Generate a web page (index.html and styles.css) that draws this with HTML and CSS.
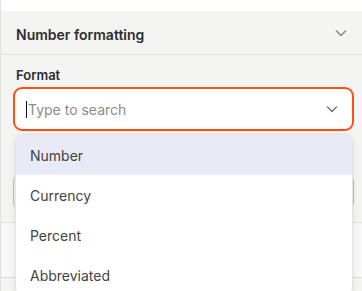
FILE: index.html
```html
<!DOCTYPE html>
<html lang="en">
<head>
<meta charset="UTF-8">
<meta name="viewport" content="width=device-width, initial-scale=1.0">
<title>Number formatting</title>
<link rel="stylesheet" href="styles.css">
</head>
<body>
<div class="top-strip"></div>
<div class="panel">
    <div class="panel-header">
        <span class="panel-title">Number formatting</span>
        <svg class="chevron" width="14" height="14" viewBox="0 0 14 14"><path d="M2.5 5l4.5 4.5L11.5 5" fill="none" stroke="#8a8a8a" stroke-width="1.5" stroke-linecap="round" stroke-linejoin="round"/></svg>
    </div>
    <div class="panel-body">
        <div class="field">
            <label class="field-label">Format</label>
            <div class="combo">
                <span class="caret"></span>
                <span class="placeholder">Type to search</span>
                <svg class="chevron" width="14" height="14" viewBox="0 0 14 14"><path d="M2.5 5l4.5 4.5L11.5 5" fill="none" stroke="#777" stroke-width="1.5" stroke-linecap="round" stroke-linejoin="round"/></svg>
            </div>
            <div class="menu">
                <div class="menu-item active">Number</div>
                <div class="menu-item">Currency</div>
                <div class="menu-item">Percent</div>
                <div class="menu-item">Abbreviated</div>
            </div>
        </div>
        <div class="field-box"></div>
    </div>
    <div class="panel-section"></div>
</div>
</body>
</html>
```

FILE: styles.css
```css
body, html {
    margin: 0;
    padding: 0;
    height: 100%;
    overflow: hidden;
}

body {
    font-family: Inter, "Noto Sans", sans-serif;
    background: #f4f4f3;
    border-left: 1px solid #e2e2e2;
    box-sizing: border-box;
}

.top-strip {
    height: 11px;
    background: #fff;
}

.panel-header {
    display: flex;
    align-items: center;
    justify-content: space-between;
    height: 43px;
    padding: 0 14px 0 15px;
    border-bottom: 1px solid #e0e0e0;
}

.panel-title {
    font-size: 14px;
    font-weight: 600;
    color: #2e2e2e;
    padding-top: 3px;
}

.panel-body {
    padding: 12px 8px 13px 12px;
    border-bottom: 1px solid #e2e2e2;
}

.field {
    position: relative;
}

.field-label {
    display: block;
    font-size: 13px;
    font-weight: 600;
    color: #2e2e2e;
    padding-left: 3px;
    margin-bottom: 4px;
}

.combo {
    display: flex;
    align-items: center;
    height: 40px;
    border: 2px solid #ff4f12;
    border-radius: 9px;
    background: #fff;
    padding: 0 13px 0 11px;
}

.caret {
    width: 1px;
    height: 17px;
    background: #111;
    margin-right: 1px;
}

.placeholder {
    flex: 1;
    font-size: 14px;
    color: #8b8b8b;
}

.field-box {
    margin-top: 44px;
    height: 32px;
    border: 1px solid #bdbdbd;
    border-radius: 6px;
    background: #f1f1f1;
}

.panel-section {
    height: 54px;
    background: #f8f8f9;
    border-bottom: 1px solid #dcdcdc;
}

.menu {
    position: absolute;
    top: 67px;
    left: 2px;
    right: 1px;
    background: #fff;
    border: 1px solid #e3e3e3;
    border-radius: 8px;
    box-shadow: 0 2px 8px rgba(0, 0, 0, 0.08);
    overflow: hidden;
    z-index: 2;
}

.menu-item {
    height: 40px;
    line-height: 42px;
    padding-left: 14px;
    font-size: 14px;
    color: #424242;
}

.menu-item.active {
    background: #e8ebf6;
}
```
